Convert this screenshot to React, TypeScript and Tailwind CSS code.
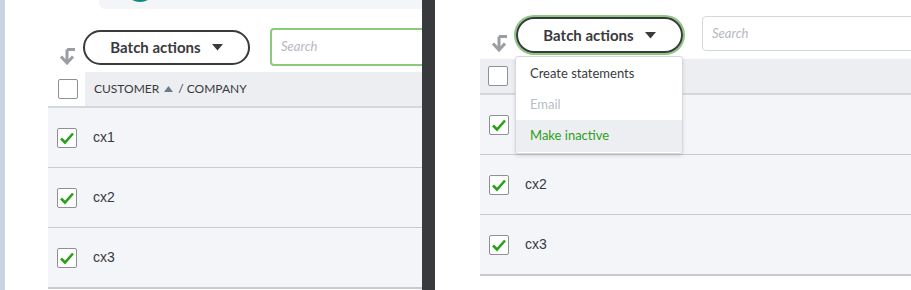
import React from 'react';

const DARK = '#393a3d';

function SortIcon() {
  return (
    <svg width="17" height="18" viewBox="0 0 17 18" fill="none">
      <path d="M8 2.5 H16 M8 2.5 V15" stroke="#9a9da3" strokeWidth="3" />
      <path d="M2 9.5 L8 16 L14 9.5" stroke="#9a9da3" strokeWidth="3" fill="none" />
    </svg>
  );
}

function Checkbox({ checked }: { checked?: boolean }) {
  return (
    <div className="w-[20px] h-[20px] rounded-[2px] border border-[#8d9096] bg-white flex items-center justify-center shrink-0">
      {checked && (
        <svg width="16" height="14" viewBox="0 0 16 14">
          <path d="M2 7.5 L6 11.5 L14 2.5" stroke="#2ca01c" strokeWidth="2.6" fill="none" />
        </svg>
      )}
    </div>
  );
}

function Caret() {
  return (
    <svg width="11" height="7" viewBox="0 0 11 7">
      <path d="M0 0 H11 L5.5 6.5 Z" fill={DARK} />
    </svg>
  );
}

function Row({ label }: { label?: string }) {
  return (
    <div className="h-[60px] flex items-center bg-[#f4f5f8] border-b border-[#c8cacf]">
      <div className="ml-[9px]">
        <Checkbox checked />
      </div>
      {label && (
        <span className="ml-[16px] text-[14px] text-[#393a3d] font-['Liberation_Sans',Arial,sans-serif]">{label}</span>
      )}
    </div>
  );
}

function LastRow({ label }: { label: string }) {
  return (
    <div className="border-b-2 border-[#c8cacf]">
      <div className="h-[59px] flex items-center bg-[#f4f5f8]">
        <div className="ml-[9px]">
          <Checkbox checked />
        </div>
        <span className="ml-[16px] text-[14px] text-[#393a3d] font-['Liberation_Sans',Arial,sans-serif]">{label}</span>
      </div>
    </div>
  );
}

export default function App() {
  return (
    <div className="w-[911px] h-[290px] flex overflow-hidden bg-white font-['Lato','Open_Sans',sans-serif]">
      {/* Left panel */}
      <div className="w-[422px] h-full flex shrink-0 overflow-hidden">
        <div className="w-[5px] bg-[#cad3e2] shrink-0" />
        <div className="flex-1 flex flex-col bg-white min-w-0">
          <div className="ml-[94px] h-[9px] bg-[#f4f5f8] rounded-bl-[6px] relative overflow-hidden shrink-0">
            <div className="absolute left-[25px] -top-[30px] w-[32px] h-[32px] rounded-full bg-[#0d8b80]" />
          </div>

          {/* Toolbar */}
          <div className="mt-[19px] h-[38px] flex items-start shrink-0">
            <div className="ml-[54px] mt-[19px]">
              <SortIcon />
            </div>
            <button className="ml-[7px] mt-[2px] w-[167px] h-[35px] rounded-full border-2 border-[#393a3d] flex items-center justify-center gap-[11px] text-[15px] font-bold text-[#393a3d] shrink-0">
              Batch actions
              <Caret />
            </button>
            <div className="ml-[20px] w-[200px] h-[38px] rounded-[4px] border-2 border-[#8cc97f] flex items-center pl-[9px] shrink-0">
              <span className="text-[13px] italic text-[#b4b8bf]">Search</span>
            </div>
          </div>

          {/* Table */}
          <div className="ml-[43px] mt-[6px]">
            <div className="h-[36px] flex border-b-2 border-[#d4d7dc]">
              <div className="w-[37px] flex items-center justify-center pl-[2px] bg-white">
                <Checkbox />
              </div>
              <div className="flex-1 bg-[#eceef1] flex items-center pl-[9px] text-[12px] text-[#393a3d] gap-[5px]">
                <span>CUSTOMER</span>
                <svg width="9" height="6" viewBox="0 0 9 6"><path d="M0 6 L4.5 0 L9 6 Z" fill="#6b7b8c" /></svg>
                <span>/ COMPANY</span>
              </div>
            </div>
            <Row label="cx1" />
            <Row label="cx2" />
            <LastRow label="cx3" />
          </div>
        </div>
      </div>

      {/* Divider */}
      <div className="w-[13px] h-full bg-[#393a3d] shrink-0" />

      {/* Right panel */}
      <div className="flex-1 h-full flex flex-col bg-white overflow-hidden min-w-0">
        <div className="mt-[16px] h-[37px] flex items-start shrink-0">
          <div className="ml-[56px] mt-[18px]">
            <SortIcon />
          </div>
          <div className="relative ml-[8px] mt-[1px] shrink-0">
            <button className="w-[167px] h-[36px] rounded-full border-2 border-[#393a3d] ring-2 ring-[#8cc97f] flex items-center justify-center gap-[11px] text-[15px] font-bold text-[#393a3d]">
              Batch actions
              <Caret />
            </button>
            {/* Dropdown menu */}
            <div className="absolute left-[-1px] top-[39px] w-[168px] bg-white border border-[#d4d7dc] rounded-[3px] shadow-[0_2px_4px_rgba(0,0,0,0.12)] pt-[1px] pb-[1px] z-10">
              <div className="h-[31px] flex items-center pl-[14px] text-[13px] text-[#393a3d]">Create statements</div>
              <div className="h-[31px] flex items-center pl-[14px] text-[13px] text-[#babec5]">Email</div>
              <div className="h-[32px] flex items-center pl-[14px] text-[13px] text-[#2ca01c] bg-[#eceef1]">Make inactive</div>
            </div>
          </div>
          <div className="ml-[19px] w-[220px] h-[35px] rounded-[4px] border border-[#d4d7dc] flex items-center pl-[9px] shrink-0">
            <span className="text-[13px] italic text-[#b4b8bf]">Search</span>
          </div>
        </div>

        <div className="ml-[45px] mt-[6px]">
          <div className="h-[36px] flex items-center bg-[#eceef1] border-b-2 border-[#d4d7dc]">
            <div className="ml-[8px]">
              <Checkbox />
            </div>
          </div>
          {/* first row's label sits under the open menu */}
          <Row />
          <Row label="cx2" />
          <LastRow label="cx3" />
        </div>
      </div>
    </div>
  );
}
